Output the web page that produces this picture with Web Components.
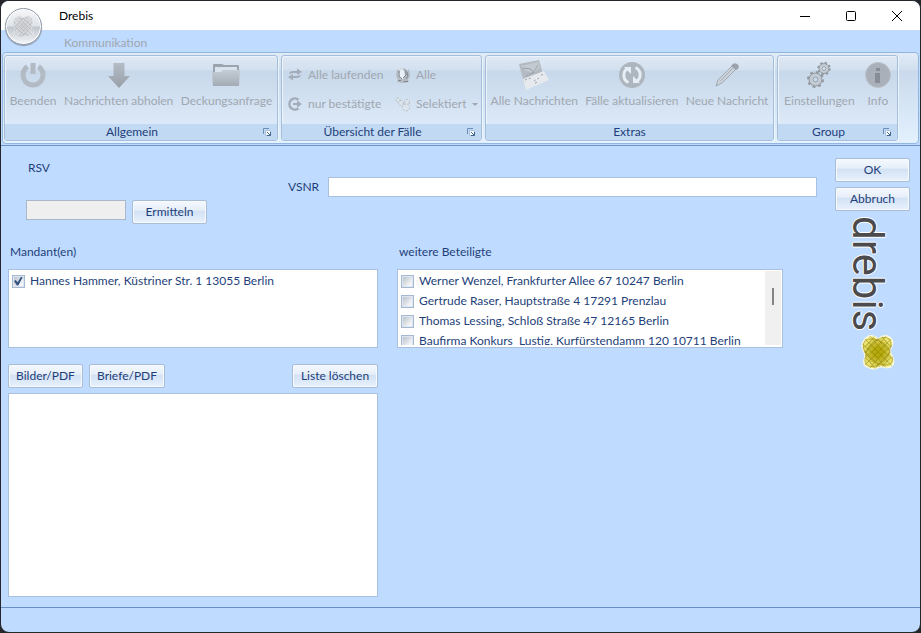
<!DOCTYPE html>
<html lang="de">
<head>
<meta charset="utf-8">
<title>Drebis</title>
<style>
  html, body {
    margin: 0;
    height: 100%;
    background: #24262b;
    overflow: hidden;
  }

  body {
    --face: #bfdbff;
    --ink: #1e3f7a;
    --line: #a9c1de;
    --muted: #a0a7b0;
    font: 12px/16px Lato, "Open Sans", sans-serif;
    color: var(--ink);
  }
</style>
</head>
<body>
<drebis-window></drebis-window>

<script>
  // Icons are drawn in grey only, the ribbon is disabled while the dialog is open
  const ICONS = {
    power: `<svg width="26" height="26" viewBox="0 0 26 26" fill="none" stroke="#b2bac4"><path stroke-width="5" d="M7.500 4.600a10 10 0 1 0 11 0"/><path stroke-width="5" d="M13 1v11"/></svg>`,
    down: `<svg width="26" height="26" viewBox="0 0 26 26"><defs><linearGradient id="g" x2="0" y2="1"><stop stop-color="#b4bcc5"/><stop offset="1" stop-color="#989fa8"/></linearGradient></defs><path fill="url(#g)" d="M7.500 1h11v13H24L13 26 2 14h5.500z"/></svg>`,
    folder: `<svg width="30" height="26" viewBox="0 0 30 26"><defs><linearGradient id="g" x2="0" y2="1"><stop stop-color="#c4ccd5"/><stop offset="1" stop-color="#a3abb4"/></linearGradient></defs><path fill="#9ba3ac" d="M2 4V3q0-1 1-1h8l2 1h14q1 0 1 1v19H2z"/><path fill="#d9e3ee" d="M4 5h22v6H4z"/><path fill="url(#g)" d="M1 10h9l2-2h17l-1 16H2z"/></svg>`,
    swap: `<svg width="16" height="16" viewBox="0 0 16 16" fill="#a3acb8"><path d="M2 7q1-3 4-3h4V1.500l5 3.500-5 3V6H6z"/><path d="M14 8q-1 3-4 3H6v2.500L1 10l5-3v2h4z"/></svg>`,
    confirm: `<svg width="16" height="16" viewBox="0 0 16 16"><path fill="none" stroke="#a3acb8" stroke-width="2.500" d="M11.500 3.800A5.500 5.500 0 1 0 11.500 12.200"/><path fill="#a3acb8" d="M6 7h4V4.500l5 3.500-5 3.500V9H6z"/></svg>`,
    lamp: `<svg width="16" height="16" viewBox="0 0 16 16"><path fill="#b4bbc3" d="M2 2l2 2 2-3 2 1 2-1 2 3 2-2 1 7-2 4 1 2-4 1H6l-4-1 1-2-2-4z"/><path fill="#eaf0f6" d="M6 1l3 3 1 5-2 3H6L4 8z"/><path fill="none" stroke="#7f868e" d="M4 4l0 5 3 3M11 3v5l-3 3M12 5l1 4-2 3M3 13.500h3M9 14.500h4"/></svg>`,
    select: `<svg width="16" height="16" viewBox="0 0 16 16" fill="#dde4ec" stroke="#b2bac4" stroke-dasharray="2 1.500"><circle cx="3" cy="4" r="2"/><circle cx="6" cy="7" r="2.500"/><circle cx="12" cy="6" r="2.500"/><circle cx="11" cy="11.500" r="3.500"/></svg>`,
    mails: `<svg width="32" height="32" viewBox="0 0 32 32"><path fill="#b3bac2" d="M1 5l20-4 5 17-20 6z"/><path fill="#c3cad1" d="M3 7l17-4 2 5-6 6-8-2z"/><path stroke="#9ca3ab" fill="none" d="M5 9l8 1 2 4 5-8M8 17l9-4"/><path fill="#e6eaee" d="M5 20l21-8 5 9-23 10z"/><path stroke="#9ca3ab" stroke-dasharray="2 2" d="M7 21l6-2M16 22l5-3M23 16l4-1M17 24l3-1"/></svg>`,
    refresh: `<svg width="26" height="26" viewBox="0 0 26 26"><circle cx="13" cy="13" r="13" fill="#adb5be"/><g fill="none" stroke="#e6edf5" stroke-width="3"><path d="M9.500 20.500a8 8 0 0 1-1-14"/><path d="M16.500 5.500a8 8 0 0 1 1 14"/></g><g fill="#e6edf5"><path d="M5 5h7v7z"/><path d="M21 21h-7v-7z"/></g></svg>`,
    pencil: `<svg width="26" height="26" viewBox="0 0 26 26"><path fill="#cdd4db" stroke="#a0a8b1" d="M2 24l2-6L19 3l4 3L8 21z"/><path fill="#9aa2ab" d="M18 3q2-3 5-1t1 5l-2 1-5-4z"/><path stroke="#a0a8b1" d="M6 19.500L20 5"/></svg>`,
    gears: `<svg width="26" height="28" viewBox="0 0 26 28" fill="none" stroke="#9299a1"><circle cx="9.500" cy="18.500" r="7" stroke-width="3" stroke-dasharray="2.700 2.800"/><circle cx="9.500" cy="18.500" r="5" stroke="#c2c9d0" stroke-width="3"/><circle cx="9.500" cy="18.500" r="6.500"/><circle cx="9.500" cy="18.500" r="2.500"/><circle cx="18" cy="7.500" r="5.500" stroke-width="2.500" stroke-dasharray="2.200 2.120"/><circle cx="18" cy="7.500" r="4" stroke="#c2c9d0" stroke-width="2"/><circle cx="18" cy="7.500" r="5"/><circle cx="18" cy="7.500" r="2"/></svg>`,
    info: `<svg width="26" height="26" viewBox="0 0 26 26"><circle cx="13" cy="13" r="12.500" fill="#a9b0b9" stroke="#b9c1ca"/><path fill="#868d96" d="M11 6h4v3h-4zM10 11h5v10h-5z"/></svg>`
  };

  // Woven star: a soft four-lobed body, darker in the middle, with crossing threads
  function star(size, inner, outer, thread, edge) {
    let lines = '';
    for (let i = -12; i <= 12; i += 4) {
      lines += `<path d="M${4 + i} ${4 - i}Q${18 + i / 2} ${18 - i / 2} ${32 + i} ${32 - i}"/>`;
      lines += `<path d="M${32 + i} ${4 + i}Q${18 + i / 2} ${18 + i / 2} ${4 + i} ${32 + i}"/>`;
    }
    const body = 'M9 2q5-1 9 3 6-5 11-2 5 3 3 9-3 4-1 8 4 6 2 10-3 5-9 3-4-1-7 1-5 2-9-1-5-1-4-7 2-4 0-8-3-5-1-10 2-4 6-6z';
    return `<svg width="${size}" height="${size}" viewBox="0 0 36 36"><defs><radialGradient id="f"><stop offset=".3" stop-color="${inner}"/><stop offset="1" stop-color="${outer}"/></radialGradient><clipPath id="c"><path d="${body}"/></clipPath></defs><path d="${body}" fill="url(#f)" stroke="${edge}" stroke-width="1.500"/><g clip-path="url(#c)" fill="none" stroke="${thread}" stroke-opacity=".45">${lines}<ellipse cx="18" cy="18" rx="17" ry="10" transform="rotate(38 18 18)"/><ellipse cx="18" cy="18" rx="17" ry="10" transform="rotate(128 18 18)"/></g></svg>`;
  }

  function define(name, markup) {
    customElements.define(name, class extends HTMLElement {
      constructor() {
        super();
        const template = document.createElement('template');
        template.innerHTML = typeof markup === 'function' ? markup(this) : markup;
        this.attachShadow({ mode: 'open' });
        this.shadowRoot.appendChild(template.content.cloneNode(true));
      }
    });
  }

  define('title-bar', `
    <style>
      :host {
        display: flex;
        align-items: center;
        justify-content: space-between;
        height: 29px;
        padding-left: 58px;
        background: #fff;
        color: #000;
      }
      nav { display: flex; }
      button {
        display: grid;
        place-items: center;
        width: 46px;
        height: 29px;
        padding: 0;
        border: 0;
        background: none;
      }
      svg { fill: none; stroke: #000; }
    </style>
    <span><slot></slot></span>
    <nav>
      <button aria-label="Minimieren"><svg width="12" height="12"><path d="M1 6.500h10"/></svg></button>
      <button aria-label="Maximieren"><svg width="12" height="12"><rect x="1.500" y="1.500" width="9" height="9" rx="1"/></svg></button>
      <button aria-label="Schließen"><svg width="12" height="12"><path d="M1 1l10 10M11 1L1 11"/></svg></button>
    </nav>
  `);

  define('office-button', `
    <style>
      :host { display: block; }
      button {
        display: grid;
        place-items: center;
        width: 37px;
        height: 37px;
        padding: 0;
        border: 1px solid #8e98a5;
        border-radius: 50%;
        background: linear-gradient(#f6f7f9, #dfe3e8 48%, #c0c6ce 52%, #f4f6f9);
        box-shadow: inset 0 0 0 1px #fff, 0 1px 1px #8793a3;
      }
    </style>
    <button aria-label="Menü">${star(23, '#cfd1d4', '#e4e6e9', '#9fa3a9', '#e3e5e8')}</button>
  `);

  define('ribbon-group', el => `
    <style>
      :host {
        display: flex;
        flex-direction: column;
        box-sizing: border-box;
        border: 1px solid #a5bfdb;
        border-radius: 3px;
        overflow: hidden;
        background: linear-gradient(#dfe9f5, #d3e0ef 14px, #c7d8ea 15px, #dce9f8 69px);
        box-shadow: inset 1px 1px #ecf3fa, 1px 1px #eaf4fd;
      }
      .items {
        flex: 1;
        display: flex;
        justify-content: space-around;
        padding: 0 1px;
      }
      footer {
        display: flex;
        align-items: center;
        height: 16px;
        background: #c1d9f2;
      }
      span { flex: 1; text-align: center; }
      button {
        display: grid;
        width: 18px;
        padding: 0 0 0 4px;
        border: 0;
        background: none;
      }
    </style>
    <div class="items"><slot></slot></div>
    <footer>
      <span>${el.getAttribute('caption')}</span>
      ${el.hasAttribute('launcher') ? `<button aria-label="${el.getAttribute('caption')} Optionen"><svg width="9" height="9" fill="none" stroke="#6c8fb5"><path d="M.500 6V.500H6"/><path fill="#fff" stroke="#a9c1de" d="M2.500 2.500h5v5h-5z"/><path stroke="#3f6690" d="M4 4l3 3M7.500 4v3.500H4"/></svg></button>` : ''}
    </footer>
  `);

  define('ribbon-button', el => `
    <style>
      :host { display: block; }
      button {
        display: flex;
        align-items: center;
        gap: 5px;
        padding: 0;
        border: 0;
        background: none;
        font: inherit;
        color: var(--muted);
        white-space: nowrap;
      }
      :host(:not([small])) button { flex-direction: column; gap: 0; }
      .icon { display: grid; place-items: center; }
      :host(:not([small])) .icon { height: 37px; }
      .drop {
        margin-left: 1px;
        border: 3px solid transparent;
        border-top-color: #a0a7b0;
        border-bottom: 0;
      }
    </style>
    <button disabled>
      <span class="icon">${ICONS[el.getAttribute('icon')]}</span>
      <slot></slot>
      ${el.hasAttribute('drop') ? '<i class="drop"></i>' : ''}
    </button>
  `);

  define('push-button', `
    <style>
      :host { display: block; min-width: 75px; }
      button {
        width: 100%;
        height: 24px;
        padding: 0 7px;
        border: 1px solid #a9bdd4;
        border-radius: 2px;
        background: linear-gradient(#f5f9fe, #e6eef9 42%, #d2e1f4 46%, #e9f2fd);
        box-shadow: inset 0 0 0 1px #f6faff;
        font: inherit;
        color: inherit;
        white-space: nowrap;
      }
    </style>
    <button><slot></slot></button>
  `);

  define('text-field', el => `
    <style>
      :host { display: flex; align-items: center; gap: 9px; }
      :host([stacked]) { flex-direction: column; align-items: flex-start; gap: 24px; }
      :host([stacked]) label { padding-left: 2px; }
      input {
        flex: 1;
        box-sizing: border-box;
        min-width: 0;
        height: 20px;
        border: 1px solid var(--line);
        padding: 0 3px;
        background: #fff;
        font: inherit;
        color: inherit;
      }
      :host([stacked]) input { flex: none; width: 100px; }
      input:disabled { background: #efefef; border-color: #a9b7c8; }
    </style>
    <label for="field">${el.getAttribute('label')}</label>
    <input id="field" type="text" ${el.hasAttribute('disabled') ? 'disabled' : ''}>
  `);

  define('check-item', el => `
    <style>
      :host { display: block; }
      label {
        display: flex;
        align-items: center;
        gap: 5px;
        height: 20px;
        white-space: nowrap;
      }
      input {
        appearance: none;
        display: grid;
        place-items: center;
        width: 13px;
        height: 13px;
        margin: 0;
        border: 1px solid #a5bad2;
        background: linear-gradient(135deg, #bcc3cc, #f3f5f8 80%) content-box, #f2f6fa;
        padding: 1px;
        box-sizing: border-box;
        outline: 1px solid #dce6f1;
        outline-offset: -2px;
      }
      input:checked::before {
        content: "";
        width: 9px;
        height: 9px;
        background: #33527f;
        clip-path: polygon(0 50%, 20% 38%, 40% 65%, 80% 0, 100% 0, 48% 100%, 32% 100%);
      }
    </style>
    <label><input type="checkbox" ${el.hasAttribute('checked') ? 'checked' : ''}><slot></slot></label>
  `);

  define('list-box', el => `
    <style>
      :host {
        display: flex;
        box-sizing: border-box;
        border: 1px solid var(--line);
        padding: 1px 1px 2px 3px;
        background: #fff;
      }
      .rows { flex: 1; min-width: 0; overflow: hidden; }
      .bar { width: 16px; background: #f0f0f0; }
      .thumb { width: 2px; height: 17px; margin: 17px auto 0 7px; background: #858585; }
    </style>
    <div class="rows"><slot></slot></div>
    ${el.hasAttribute('scroll') ? '<div class="bar"><div class="thumb"></div></div>' : ''}
  `);

  define('drebis-logo', `
    <style>
      :host { display: flex; flex-direction: column; align-items: flex-start; padding-left: 11px; }
      span {
        writing-mode: vertical-rl;
        font: 42px/42px Roboto, sans-serif;
        color: #4b4b4d;
        text-shadow: 1px 0 #fff, -1px 0 #fff, 0 1px #fff, 0 -1px #fff;
      }
      div { display: grid; padding: 3px 0 0 14px; }
    </style>
    <span>drebis</span>
    <div>${star(36, '#b5a80c', '#eee77a', '#857a00', '#fbf9dc')}</div>
  `);

  define('drebis-window', `
    <style>
      :host {
        display: flex;
        flex-direction: column;
        box-sizing: border-box;
        position: relative;
        height: 100vh;
        border: 1px solid #24262b;
        border-radius: 9px;
        overflow: hidden;
        background: var(--face);
      }
      office-button { position: absolute; left: 4px; top: 7px; }
      .tabs {
        height: 22px;
        padding-left: 63px;
        line-height: 26px;
        color: var(--muted);
      }
      .ribbon {
        display: grid;
        grid-template-columns: 274px 201px 289px 121px;
        gap: 3px;
        height: 92px;
        margin: 0 1px;
        box-sizing: border-box;
        padding: 2px 1px;
        border: 1px solid #92b6e0;
        border-radius: 4px;
        background: linear-gradient(#e2ecf7, #d0deee 17px, #cadaec 18px, #e3f1fe);
      }
      .pairs {
        flex: 1;
        display: grid;
        grid-template-columns: 108px auto;
        align-content: start;
        row-gap: 13px;
        padding: 11px 0 0 4px;
      }
      .content {
        flex: 1;
        display: flex;
        gap: 18px;
        margin-top: 1px;
        border-top: 1px solid #6a94cb;
        border-bottom: 1px solid #6a8fc4;
        padding: 12px 10px 10px 7px;
      }
      main { flex: 1; display: flex; flex-direction: column; }
      aside { width: 75px; display: flex; flex-direction: column; gap: 5px; }
      .search { display: flex; align-items: flex-end; padding: 2px 0 0 18px; }
      .search text-field:last-child { flex: 1; align-self: center; margin: 0 0 6px 81px; }
      .search push-button { margin: 0 0 -4px 6px; }
      .lists {
        flex: 1;
        display: grid;
        grid-template-columns: 370fr 386fr;
        column-gap: 19px;
        padding: 24px 34px 0 0;
      }
      section { display: flex; flex-direction: column; }
      h2 { margin: 0 0 9px 2px; font: inherit; }
      list-box { height: 79px; }
      .tools { display: flex; gap: 6px; margin: 16px 0 5px; }
      .tools push-button:last-child { min-width: 86px; margin-left: auto; }
      .files { flex: 1; }
      footer { height: 24px; }
    </style>
    <title-bar>Drebis</title-bar>
    <div class="tabs">Kommunikation</div>
    <office-button></office-button>
    <div class="ribbon">
      <ribbon-group caption="Allgemein" launcher>
        <ribbon-button icon="power">Beenden</ribbon-button>
        <ribbon-button icon="down">Nachrichten abholen</ribbon-button>
        <ribbon-button icon="folder">Deckungsanfrage</ribbon-button>
      </ribbon-group>
      <ribbon-group caption="Übersicht der Fälle" launcher>
        <div class="pairs">
          <ribbon-button small icon="swap">Alle laufenden</ribbon-button>
          <ribbon-button small icon="lamp">Alle</ribbon-button>
          <ribbon-button small icon="confirm">nur bestätigte</ribbon-button>
          <ribbon-button small drop icon="select">Selektiert</ribbon-button>
        </div>
      </ribbon-group>
      <ribbon-group caption="Extras">
        <ribbon-button icon="mails">Alle Nachrichten</ribbon-button>
        <ribbon-button icon="refresh">Fälle aktualisieren</ribbon-button>
        <ribbon-button icon="pencil">Neue Nachricht</ribbon-button>
      </ribbon-group>
      <ribbon-group caption="Group" launcher>
        <ribbon-button icon="gears">Einstellungen</ribbon-button>
        <ribbon-button icon="info">Info</ribbon-button>
      </ribbon-group>
    </div>
    <div class="content">
      <main>
        <div class="search">
          <text-field stacked disabled label="RSV"></text-field>
          <push-button>Ermitteln</push-button>
          <text-field label="VSNR"></text-field>
        </div>
        <div class="lists">
          <section>
            <h2>Mandant(en)</h2>
            <list-box>
              <check-item checked>Hannes Hammer, Küstriner Str. 1 13055 Berlin</check-item>
            </list-box>
            <div class="tools">
              <push-button>Bilder/PDF</push-button>
              <push-button>Briefe/PDF</push-button>
              <push-button>Liste löschen</push-button>
            </div>
            <list-box class="files"></list-box>
          </section>
          <section>
            <h2>weitere Beteiligte</h2>
            <list-box scroll>
              <check-item>Werner Wenzel, Frankfurter Allee 67 10247 Berlin</check-item>
              <check-item>Gertrude Raser, Hauptstraße 4 17291 Prenzlau</check-item>
              <check-item>Thomas Lessing, Schloß Straße 47 12165 Berlin</check-item>
              <check-item>Baufirma Konkurs&nbsp; Lustig, Kurfürstendamm 120 10711 Berlin</check-item>
            </list-box>
          </section>
        </div>
      </main>
      <aside>
        <push-button>OK</push-button>
        <push-button>Abbruch</push-button>
        <drebis-logo></drebis-logo>
      </aside>
    </div>
    <footer></footer>
  `);
</script>
</body>
</html>
